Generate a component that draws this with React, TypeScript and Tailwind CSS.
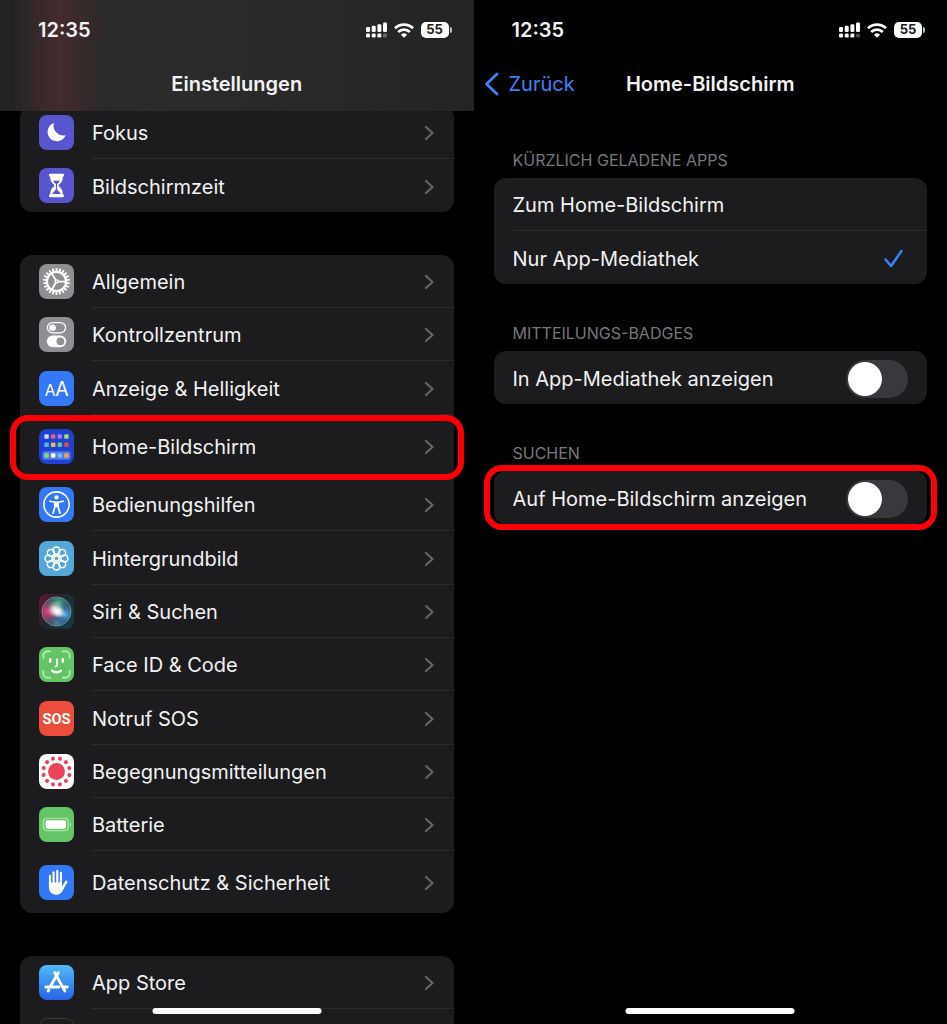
import { useState } from "react";
import type { ReactNode } from "react";

type Item = {
  label: string;
  icon: ReactNode;
  className?: string;
  highlighted?: boolean;
};

const range = (count: number) => Array.from({ length: count }, (_, i) => i);

function Tile({ className, children }: { className: string; children?: ReactNode }) {
  return (
    <svg viewBox="0 0 36 36" aria-hidden="true" className={`size-[35px] shrink-0 rounded-lg ${className}`}>
      {children}
    </svg>
  );
}

function MoonIcon() {
  return (
    <Tile className="bg-[#5756ce]">
      <path d="M15.4 8.3a9.6 9.6 0 1 0 12 12.4A9.9 9.9 0 0 1 15.4 8.3Z" fill="#fff" />
    </Tile>
  );
}

function HourglassIcon() {
  return (
    <Tile className="bg-[#5756ce]">
      <path d="M11.5 6h13c1 0 1.3.8 1.3 1.5 0 .9-.6 1.4-1.3 1.5-.1 4.2-1.3 6-4.2 8.2v1.6c2.9 2.2 4.1 4.3 4.2 8.2.7.1 1.3.6 1.3 1.5 0 .7-.3 1.5-1.3 1.5h-13c-1 0-1.3-.8-1.3-1.5 0-.9.6-1.4 1.3-1.5.1-3.9 1.3-6 4.2-8.2v-1.6c-2.9-2.2-4.1-4-4.2-8.2-.7-.1-1.3-.6-1.3-1.5 0-.7.3-1.5 1.3-1.5Z" fill="#fff" />
      <path d="M14.5 13h7c-.7 1.5-1.6 2.4-2.9 3.5V22l3.9 4.8h-9l3.9-4.8v-5.5c-1.3-1.1-2.2-2-2.9-3.5Z" fill="#5756ce" />
    </Tile>
  );
}

function GearIcon() {
  return (
    <Tile className="bg-[#8e8e93]">
      <g stroke="#fff" fill="none">
        {range(22).map((i) => (
          <path key={i} d="M18 4.2v3.3" strokeWidth="1.9" transform={`rotate(${(i * 360) / 22} 18 18)`} />
        ))}
        <circle cx="18" cy="18" r="9.9" strokeWidth="2.3" />
        {[90, 210, 330].map((angle) => (
          <path key={angle} d="M18 17V8.5" strokeWidth="1.8" transform={`rotate(${angle} 18 18)`} />
        ))}
      </g>
      <circle cx="18" cy="18" r="2.2" fill="#fff" />
      <circle cx="18" cy="18" r="0.8" fill="#8e8e93" />
    </Tile>
  );
}

function ControlsIcon() {
  return (
    <Tile className="bg-[#8e8e93]">
      <rect x="8.7" y="5.7" width="18.6" height="10.6" rx="5.3" fill="none" stroke="#fff" strokeWidth="1.3" />
      <circle cx="14" cy="11" r="3.4" fill="#fff" />
      <rect x="8" y="19" width="20" height="12" rx="6" fill="#fff" />
      <circle cx="22" cy="25" r="4" fill="#8e8e93" />
    </Tile>
  );
}

function DisplayIcon() {
  return (
    <Tile className="bg-[#3478f6]">
      <g fill="#fff" className="font-[Inter,sans-serif]" textAnchor="middle">
        <text x="11.5" y="25.5" fontSize="16">A</text>
        <text x="23.5" y="25.5" fontSize="20">A</text>
      </g>
    </Tile>
  );
}

function HomeIcon() {
  const rows = [
    ["#cfd6f5", "#e0607e", "#a878f5", "#a5d86e"],
    ["#56b4f5", "#f3b84b", "#5ecb93", "#e04c4c"],
    ["#7fdc8c", "#ffffff", "#6cc0fa", "#f0a45c"],
  ];
  const tops = [5.5, 14, 25];
  return (
    <Tile className="bg-[#1f41d0]">
      <rect x="3.5" y="23" width="29" height="8.6" rx="2" fill="#5579e4" />
      {rows.map((row, r) =>
        row.map((color, c) => (
          <rect key={`${r}-${c}`} x={5.5 + c * 6.8} y={tops[r]} width="4.6" height="4.6" rx="1.2" fill={color} />
        )),
      )}
    </Tile>
  );
}

function AccessibilityIcon() {
  return (
    <Tile className="bg-[#3478f6]">
      <circle cx="18" cy="18" r="13" fill="none" stroke="#fff" strokeWidth="1.6" />
      <circle cx="18" cy="10.7" r="2.2" fill="#fff" />
      <path d="M11.2 14.6 16.3 15.7v5l-1.9 6.2M24.8 14.6 19.7 15.7v5l1.9 6.2" fill="none" stroke="#fff" strokeWidth="1.7" strokeLinecap="round" strokeLinejoin="round" />
      <path d="M15.7 14.8h4.6v6.8l-1.3-.8h-2l-1.3.8Z" fill="#fff" />
    </Tile>
  );
}

function WallpaperIcon() {
  return (
    <Tile className="bg-[#55a7da]">
      <g fill="none" stroke="#fff" strokeWidth="1.5">
        {range(8).map((i) => (
          <circle key={i} cx="18" cy="9.8" r="3.6" transform={`rotate(${i * 45} 18 18)`} />
        ))}
        {range(8).map((i) => (
          <path key={i} d="M18 15.5v-3" transform={`rotate(${i * 45 + 22.5} 18 18)`} />
        ))}
        <circle cx="18" cy="18" r="2.6" />
      </g>
    </Tile>
  );
}

function SiriIcon() {
  return (
    <Tile className="bg-[#22202b]">
      <defs>
        <linearGradient id="siriBack" x1="0" y1="0" x2="1" y2="0.5">
          <stop offset="0" stopColor="#6c1537" />
          <stop offset="0.45" stopColor="#22242c" />
          <stop offset="1" stopColor="#14383f" />
        </linearGradient>
        <radialGradient id="siriRed">
          <stop offset="0" stopColor="#e8447f" />
          <stop offset="1" stopColor="#b51b50" stopOpacity="0" />
        </radialGradient>
        <radialGradient id="siriGreen">
          <stop offset="0" stopColor="#56c9a0" />
          <stop offset="1" stopColor="#1f7060" stopOpacity="0" />
        </radialGradient>
        <radialGradient id="siriBlue">
          <stop offset="0" stopColor="#5ab4f4" />
          <stop offset="1" stopColor="#1b4c9c" stopOpacity="0" />
        </radialGradient>
        <radialGradient id="siriGlow">
          <stop offset="0" stopColor="#fff" />
          <stop offset="0.35" stopColor="#fff" stopOpacity="0.8" />
          <stop offset="1" stopColor="#fff" stopOpacity="0" />
        </radialGradient>
        <clipPath id="siriOrb">
          <circle cx="18" cy="18" r="15" />
        </clipPath>
      </defs>
      <rect width="36" height="36" fill="url(#siriBack)" />
      <g clipPath="url(#siriOrb)">
        <circle cx="18" cy="18" r="15" fill="#3c5560" />
        <circle cx="9" cy="18" r="14" fill="url(#siriRed)" />
        <circle cx="20" cy="9" r="14" fill="url(#siriGreen)" opacity="0.7" />
        <circle cx="27" cy="21" r="12" fill="url(#siriBlue)" />
        <circle cx="19" cy="30" r="11" fill="url(#siriBlue)" opacity="0.5" />
        <circle cx="17" cy="16" r="9" fill="url(#siriGlow)" opacity="0.6" />
        <ellipse cx="19" cy="18" rx="9" ry="6" fill="url(#siriGlow)" transform="rotate(28 19 18)" />
      </g>
      <circle cx="18" cy="18" r="15" fill="none" stroke="#83a4a4" strokeWidth="0.9" opacity="0.8" />
    </Tile>
  );
}

function FaceIdIcon() {
  return (
    <Tile className="bg-[#65c466]">
      <path d="M4.5 11.5v-3a4 4 0 0 1 4-4h3M24.5 4.5h3a4 4 0 0 1 4 4v3M31.5 24.5v3a4 4 0 0 1-4 4h-3M11.5 31.5h-3a4 4 0 0 1-4-4v-3" fill="none" stroke="#b9f0b6" strokeWidth="1.7" strokeLinecap="round" />
      <g fill="none" stroke="#fff" strokeWidth="2.4" strokeLinecap="round" strokeLinejoin="round">
        <path d="M11.5 12.5v2.6M24.5 12.5v2.6" />
        <path d="M18.6 12.5v6.2c0 .9-.5 1.3-1.6 1.3" strokeWidth="2" />
        <path d="M13.5 24.2c2.6 2.4 6.4 2.4 9 0" />
      </g>
    </Tile>
  );
}

function SosIcon() {
  return (
    <Tile className="bg-[#eb4e3d]">
      <text x="18" y="23.5" textAnchor="middle" fontSize="15" fill="#fff" className="font-[Roboto,sans-serif] font-bold">SOS</text>
    </Tile>
  );
}

function ExposureIcon() {
  return (
    <Tile className="bg-white">
      <g fill="#eb445a">
        <circle cx="18" cy="18" r="8.7" />
        {range(12).map((i) => (
          <circle key={i} cx="18" cy="4.3" r="2.1" transform={`rotate(${i * 30 + 15} 18 18)`} />
        ))}
      </g>
    </Tile>
  );
}

function BatteryTileIcon() {
  return (
    <Tile className="bg-[#65c466]">
      <rect x="4.6" y="11.6" width="25.5" height="12.8" rx="3.6" fill="none" stroke="#b9e8b8" strokeWidth="1.2" />
      <rect x="6.8" y="13.7" width="21" height="8.6" rx="1.8" fill="#fff" />
      <path d="M31.8 16c1.6.7 1.6 3.3 0 4Z" fill="#b9e8b8" />
    </Tile>
  );
}

function HandIcon() {
  return (
    <Tile className="bg-[#3478f6]">
      <g fill="none" stroke="#fff" strokeWidth="2.2" strokeLinecap="round">
        <path d="M11.3 21v-9.8M15 19V7.5M18.8 19V6M22.5 20V8" />
        <path d="M23.6 24.5 28 17.3" strokeWidth="2.6" />
      </g>
      <path d="M10.2 18h13.4v3.5l2.7-.2c-1.7 4.9-3 9.2-8.3 9.2-4.8 0-7.8-2.9-7.8-7.5Z" fill="#fff" />
    </Tile>
  );
}

function AppStoreIcon() {
  return (
    <Tile className="bg-linear-to-b from-[#56b9f9] to-[#2a63e6]">
      <g fill="none" stroke="#fff" strokeWidth="3" strokeLinecap="round">
        <path d="M19.8 8 11.7 22M16.2 8l10.3 18.6" />
        <path d="M7 22.6h13.5M25.2 22.6H29" />
        <path d="m10.1 25.7-.6 1" />
      </g>
    </Tile>
  );
}

function ChevronIcon() {
  return (
    <svg viewBox="0 0 10 16" aria-hidden="true" className="h-4 w-2.5 shrink-0">
      <path d="m2 2 6.5 6L2 14" fill="none" stroke="#636367" strokeWidth="2.3" strokeLinecap="round" strokeLinejoin="round" />
    </svg>
  );
}

const focusItems: Item[] = [
  { label: "Fokus", icon: <MoonIcon /> },
  { label: "Bildschirmzeit", icon: <HourglassIcon /> },
];

const generalItems: Item[] = [
  { label: "Allgemein", icon: <GearIcon /> },
  { label: "Kontrollzentrum", icon: <ControlsIcon /> },
  { label: "Anzeige & Helligkeit", icon: <DisplayIcon /> },
  { label: "Home-Bildschirm", icon: <HomeIcon />, className: "h-[63px]", highlighted: true },
  { label: "Bedienungshilfen", icon: <AccessibilityIcon /> },
  { label: "Hintergrundbild", icon: <WallpaperIcon /> },
  { label: "Siri & Suchen", icon: <SiriIcon /> },
  { label: "Face ID & Code", icon: <FaceIdIcon /> },
  { label: "Notruf SOS", icon: <SosIcon /> },
  { label: "Begegnungsmitteilungen", icon: <ExposureIcon /> },
  { label: "Batterie", icon: <BatteryTileIcon /> },
  { label: "Datenschutz & Sicherheit", icon: <HandIcon />, className: "h-[62px]" },
];

const storeItems: Item[] = [
  { label: "App Store", icon: <AppStoreIcon /> },
  { label: "", icon: <Tile className="border border-[#3a3a3c] bg-[#1c1c1e]" /> },
];

function SettingsList({ items }: { items: Item[] }) {
  return (
    <ul className="mx-5 rounded-xl bg-[#1c1c1e]">
      {items.map((item) => (
        <li key={item.label} className={`group relative ${item.className ?? "h-[53px] nth-[3n]:h-[54px]"}`}>
          <a href="#" className="flex h-full items-center gap-[18px] pl-[19px]">
            {item.icon}
            <span className="flex h-full min-w-0 flex-1 items-center justify-between border-b border-[#2c2c2e] pt-0.5 pr-5 group-last:border-b-0">
              <span className="truncate">{item.label}</span>
              <ChevronIcon />
            </span>
          </a>
          {item.highlighted && <Highlight className="-inset-x-2.5 top-0 -bottom-0.5" />}
        </li>
      ))}
    </ul>
  );
}

// Red marker frame laid over a row
function Highlight({ className }: { className: string }) {
  return <span aria-hidden="true" className={`pointer-events-none absolute z-10 rounded-[18px] border-6 border-[#fb0007] ${className}`} />;
}

function StatusBar() {
  return (
    <div className="flex h-[60px] items-center justify-between pr-[22px] pl-[38px]">
      <span className="font-semibold">12:35</span>
      <div className="flex items-center gap-[7px]">
        <svg viewBox="0 0 21 16" aria-label="Signal" className="h-4 w-[21px]" fill="#fff">
          <rect x="0" y="5" width="4" height="5" rx="1.2" />
          <rect x="5.7" y="3.7" width="4" height="6.3" rx="1.2" />
          <rect x="11.4" y="2.2" width="4" height="7.8" rx="1.2" />
          <rect x="17" y="0.5" width="4" height="9.5" rx="1.2" />
          <rect x="0" y="11.6" width="4" height="4" rx="1.4" />
          <rect x="5.7" y="11.6" width="4" height="4" rx="1.4" />
          <rect x="11.4" y="11.6" width="4" height="4" rx="1.4" />
          <rect x="17" y="11.6" width="4" height="4" rx="1.4" opacity="0.3" />
        </svg>
        <svg viewBox="0 0 20 15" aria-label="WLAN" className="h-[15px] w-5" fill="none" stroke="#fff" strokeWidth="2.8">
          <path d="M1 5.2a13 13 0 0 1 18 0" />
          <path d="M4.2 8.9a8.3 8.3 0 0 1 11.6 0" />
          <path d="M10 14.8 7 11.7a4.4 4.4 0 0 1 6 0Z" fill="#fff" stroke="none" />
        </svg>
        <span className="flex items-center gap-px">
          <span className="flex h-4 w-7 items-center justify-center rounded-[5px] bg-white text-[13px] font-bold text-[#1c1c1e]">55</span>
          <span className="h-1.5 w-0.5 rounded-r-full bg-[#c4c4c4]" />
        </span>
      </div>
    </div>
  );
}

function HomeIndicator() {
  return <div className="absolute bottom-[10px] left-1/2 z-20 h-1.5 w-[169px] -translate-x-1/2 rounded-full bg-white" />;
}

function SectionTitle({ children }: { children: ReactNode }) {
  return <h2 className="mt-[39px] mb-2 px-[39px] text-base/5 text-[#76767b] uppercase">{children}</h2>;
}

function SwitchRow({ label }: { label: string }) {
  const [on, setOn] = useState(false);
  return (
    <label className="flex h-[53px] items-center justify-between px-[19px] pt-0.5">
      <span className="truncate">{label}</span>
      <input
        type="checkbox"
        role="switch"
        checked={on}
        onChange={(e) => setOn(e.target.checked)}
        className="h-[38px] w-[62px] shrink-0 appearance-none rounded-full bg-[#39393d] p-0.5 before:block before:size-[34px] before:rounded-full before:bg-white checked:bg-[#65c466] checked:before:ml-6"
      />
    </label>
  );
}

function SettingsScreen() {
  return (
    <section className="relative h-screen overflow-hidden bg-black">
      <header className="relative z-10 h-[111px] bg-linear-to-r from-[#222222] via-[#2c2c2c] via-30% to-[#242424]">
        <div className="absolute inset-y-0 left-0 w-1/4 bg-linear-to-r from-transparent from-10% via-[#452b2d] to-transparent to-90%" />
        <div className="relative">
          <StatusBar />
          <h1 className="flex h-12 items-center justify-center font-semibold">Einstellungen</h1>
        </div>
      </header>
      <nav className="-mt-[5px] flex flex-col gap-[43px]">
        <SettingsList items={focusItems} />
        <SettingsList items={generalItems} />
        <SettingsList items={storeItems} />
      </nav>
      <HomeIndicator />
    </section>
  );
}

function HomeScreenOptions() {
  const [target, setTarget] = useState("library");
  const options = [
    { value: "home", label: "Zum Home-Bildschirm" },
    { value: "library", label: "Nur App-Mediathek" },
  ];

  return (
    <section className="relative h-screen overflow-hidden bg-black">
      <header className="h-[111px]">
        <StatusBar />
        <div className="grid h-12 grid-cols-[1fr_auto_1fr] items-center">
          <button type="button" className="flex items-center gap-2.5 pl-2.5 text-[#3b82f6]">
            <svg viewBox="0 0 15 24" aria-hidden="true" className="h-6 w-[15px]">
              <path d="M13 2 2.5 12 13 22" fill="none" stroke="currentColor" strokeWidth="2.8" strokeLinecap="round" strokeLinejoin="round" />
            </svg>
            Zurück
          </button>
          <h1 className="font-semibold">Home-Bildschirm</h1>
        </div>
      </header>

      <SectionTitle>Kürzlich geladene Apps</SectionTitle>
      <div className="mx-5 rounded-xl bg-[#1c1c1e]">
        {options.map((option) => (
          <label key={option.value} className="group flex h-[53px] pl-[19px]">
            <input type="radio" name="target" className="sr-only" checked={target === option.value} onChange={() => setTarget(option.value)} />
            <span className="flex flex-1 items-center justify-between border-b border-[#2c2c2e] pt-0.5 pr-6 group-last:border-b-0">
              {option.label}
              {target === option.value && (
                <svg viewBox="0 0 19 19" aria-hidden="true" className="size-[19px]">
                  <path d="m1.5 10.5 5.5 6.5L17.5 2" fill="none" stroke="#3b82f6" strokeWidth="2.5" strokeLinecap="round" strokeLinejoin="round" />
                </svg>
              )}
            </span>
          </label>
        ))}
      </div>

      <SectionTitle>Mitteilungs-Badges</SectionTitle>
      <div className="mx-5 rounded-xl bg-[#1c1c1e]">
        <SwitchRow label="In App-Mediathek anzeigen" />
      </div>

      <SectionTitle>Suchen</SectionTitle>
      <div className="relative mx-5 rounded-xl bg-[#1c1c1e]">
        <SwitchRow label="Auf Home-Bildschirm anzeigen" />
        <Highlight className="-inset-x-2.5 -inset-y-1.5" />
      </div>
      <HomeIndicator />
    </section>
  );
}

export default function App() {
  return (
    <main className="grid grid-cols-2 bg-black font-[Inter,'Liberation_Sans',sans-serif] text-[20px] text-[#f2f2f4]">
      <SettingsScreen />
      <HomeScreenOptions />
    </main>
  );
}
